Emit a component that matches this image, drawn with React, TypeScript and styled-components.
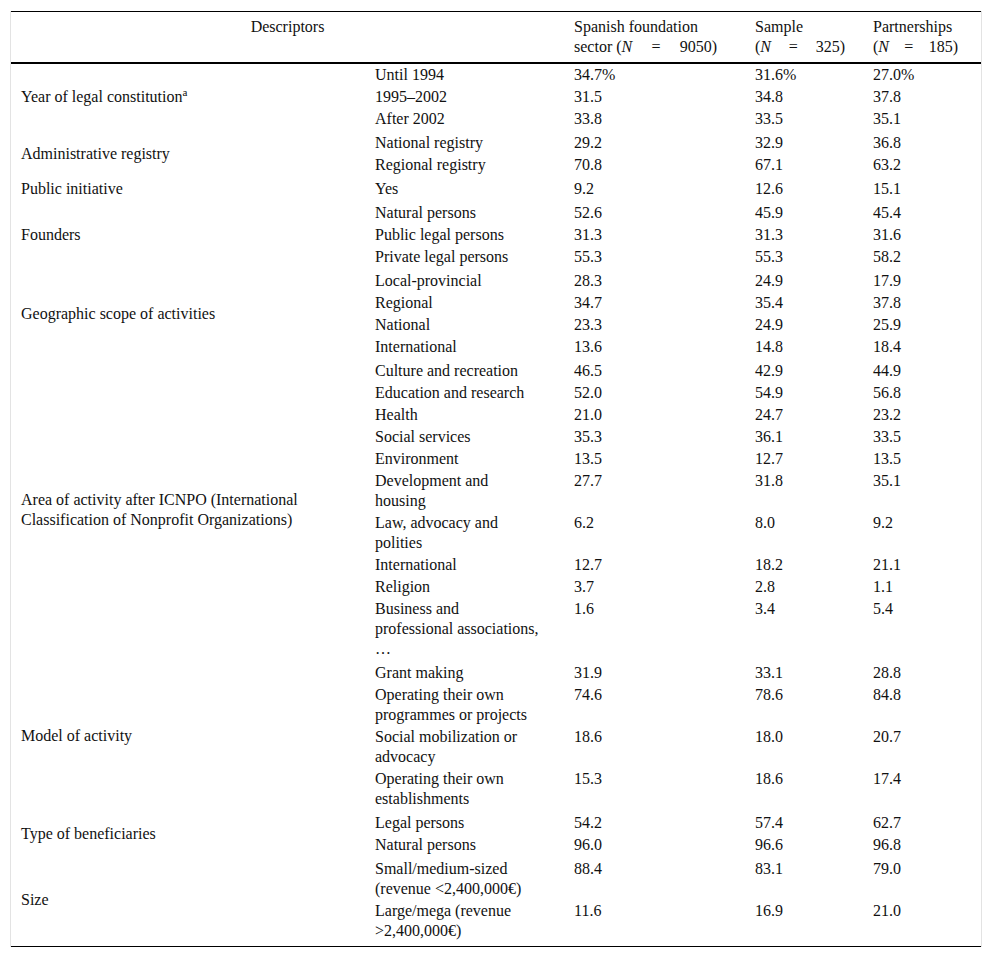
import React from "react";
import styled, { createGlobalStyle } from "styled-components";

const GlobalStyle = createGlobalStyle`
  html, body { margin: 0; padding: 0; background: #fff; }
  body { font-family: "Liberation Serif", "Times New Roman", serif; color: #111; }
`;

const Frame = styled.div`
  margin: 11px 10px 0;
  border-left: 1px solid #e3e3e3;
  border-right: 1px solid #e3e3e3;
`;

const Table = styled.table`
  width: 970px;
  border-spacing: 0;
  border-top: 1px solid #000;
  border-bottom: 1px solid #000;
  table-layout: fixed;
  font-size: 16px;
  line-height: 20px;
`;

const HeadCell = styled.th<{ $center?: boolean }>`
  font-weight: normal;
  text-align: ${(p) => (p.$center ? "center" : "left")};
  vertical-align: top;
  padding: 5px 10px;
  border-bottom: 2px solid #000;
`;

const NLine = styled.span<{ $w: number }>`
  display: flex;
  justify-content: space-between;
  width: ${(p) => p.$w}px;
  white-space: nowrap;
`;

const Cell = styled.td<{ $gap?: boolean; $end?: boolean; $wideRight?: boolean }>`
  vertical-align: top;
  padding: ${(p) => (p.$gap ? 3 : 1)}px ${(p) => (p.$wideRight ? 24 : 10)}px
    ${(p) => (p.$end ? 5 : 1)}px 10px;
`;

const LabelCell = styled(Cell)`
  vertical-align: middle;
  padding-right: 60px;
`;

const Sup = styled.sup`
  font-size: 11px;
  line-height: 0;
  vertical-align: 6px;
`;

type Group = { label: React.ReactNode; rows: [string, string, string, string][] };

const groups: Group[] = [
  {
    label: (
      <>
        Year of legal constitution<Sup>a</Sup>
      </>
    ),
    rows: [
      ["Until 1994", "34.7%", "31.6%", "27.0%"],
      ["1995–2002", "31.5", "34.8", "37.8"],
      ["After 2002", "33.8", "33.5", "35.1"],
    ],
  },
  {
    label: "Administrative registry",
    rows: [
      ["National registry", "29.2", "32.9", "36.8"],
      ["Regional registry", "70.8", "67.1", "63.2"],
    ],
  },
  { label: "Public initiative", rows: [["Yes", "9.2", "12.6", "15.1"]] },
  {
    label: "Founders",
    rows: [
      ["Natural persons", "52.6", "45.9", "45.4"],
      ["Public legal persons", "31.3", "31.3", "31.6"],
      ["Private legal persons", "55.3", "55.3", "58.2"],
    ],
  },
  {
    label: "Geographic scope of activities",
    rows: [
      ["Local-provincial", "28.3", "24.9", "17.9"],
      ["Regional", "34.7", "35.4", "37.8"],
      ["National", "23.3", "24.9", "25.9"],
      ["International", "13.6", "14.8", "18.4"],
    ],
  },
  {
    label: "Area of activity after ICNPO (International Classification of Nonprofit Organizations)",
    rows: [
      ["Culture and recreation", "46.5", "42.9", "44.9"],
      ["Education and research", "52.0", "54.9", "56.8"],
      ["Health", "21.0", "24.7", "23.2"],
      ["Social services", "35.3", "36.1", "33.5"],
      ["Environment", "13.5", "12.7", "13.5"],
      ["Development and housing", "27.7", "31.8", "35.1"],
      ["Law, advocacy and polities", "6.2", "8.0", "9.2"],
      ["International", "12.7", "18.2", "21.1"],
      ["Religion", "3.7", "2.8", "1.1"],
      ["Business and professional associations, …", "1.6", "3.4", "5.4"],
    ],
  },
  {
    label: "Model of activity",
    rows: [
      ["Grant making", "31.9", "33.1", "28.8"],
      ["Operating their own programmes or projects", "74.6", "78.6", "84.8"],
      ["Social mobilization or advocacy", "18.6", "18.0", "20.7"],
      ["Operating their own establishments", "15.3", "18.6", "17.4"],
    ],
  },
  {
    label: "Type of beneficiaries",
    rows: [
      ["Legal persons", "54.2", "57.4", "62.7"],
      ["Natural persons", "96.0", "96.6", "96.8"],
    ],
  },
  {
    label: "Size",
    rows: [
      ["Small/medium-sized (revenue <2,400,000€)", "88.4", "83.1", "79.0"],
      ["Large/mega (revenue >2,400,000€)", "11.6", "16.9", "21.0"],
    ],
  },
];

export default function App() {
  return (
    <>
      <GlobalStyle />
      <Frame>
        <Table>
          <colgroup>
            <col style={{ width: 354 }} />
            <col style={{ width: 199 }} />
            <col style={{ width: 181 }} />
            <col style={{ width: 118 }} />
            <col style={{ width: 118 }} />
          </colgroup>
          <thead>
            <tr>
              <HeadCell colSpan={2} $center>
                Descriptors
              </HeadCell>
              <HeadCell>
                Spanish foundation
                <NLine $w={143}>
                  <span>
                    sector (<i>N</i>
                  </span>
                  <span>=</span>
                  <span>9050)</span>
                </NLine>
              </HeadCell>
              <HeadCell>
                Sample
                <NLine $w={90}>
                  <span>
                    (<i>N</i>
                  </span>
                  <span>=</span>
                  <span>325)</span>
                </NLine>
              </HeadCell>
              <HeadCell>
                Partnerships
                <NLine $w={85}>
                  <span>
                    (<i>N</i>
                  </span>
                  <span>=</span>
                  <span>185)</span>
                </NLine>
              </HeadCell>
            </tr>
          </thead>
          <tbody>
            {groups.map((g, gi) =>
              g.rows.map((r, ri) => {
                const gap = gi > 0 && ri === 0;
                const end = gi === groups.length - 1 && ri === g.rows.length - 1;
                return (
                  <tr key={`${gi}-${ri}`}>
                    {ri === 0 && (
                      <LabelCell rowSpan={g.rows.length} $gap={gap} $end={gi === groups.length - 1}>
                        {g.label}
                      </LabelCell>
                    )}
                    <Cell $gap={gap} $end={end} $wideRight>
                      {r[0]}
                    </Cell>
                    <Cell $gap={gap} $end={end}>
                      {r[1]}
                    </Cell>
                    <Cell $gap={gap} $end={end}>
                      {r[2]}
                    </Cell>
                    <Cell $gap={gap} $end={end}>
                      {r[3]}
                    </Cell>
                  </tr>
                );
              })
            )}
          </tbody>
        </Table>
      </Frame>
    </>
  );
}
